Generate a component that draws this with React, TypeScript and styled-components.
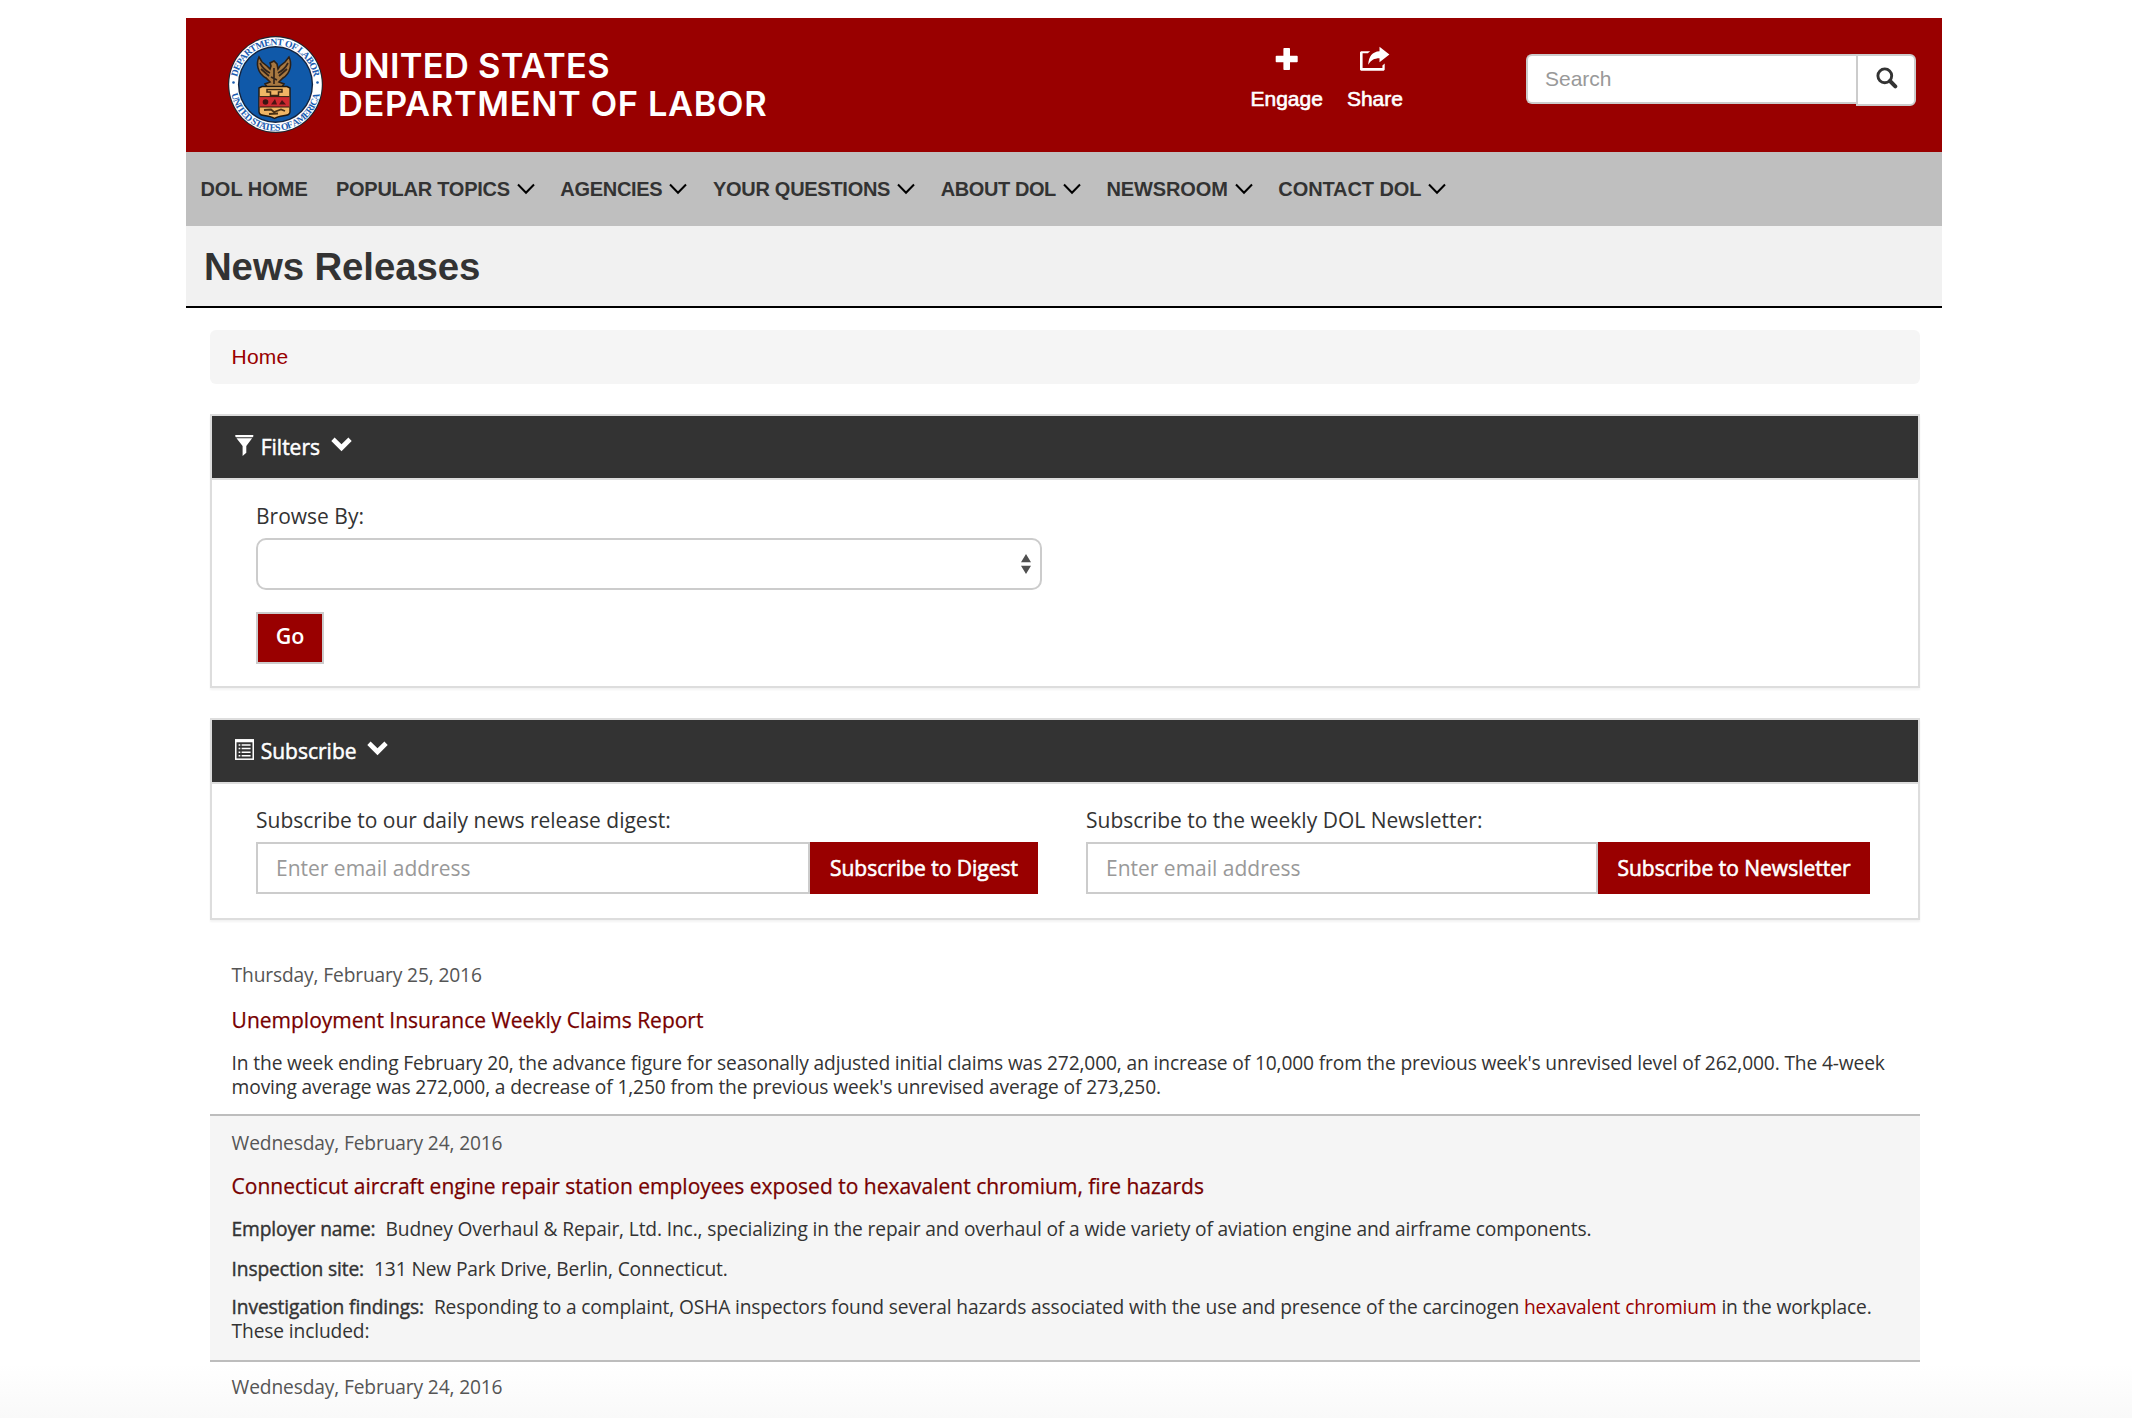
import React from "react";
import styled, { createGlobalStyle, css } from "styled-components";

const sans = `"Liberation Sans", Arial, sans-serif`;
const open = `"Open Sans", "Noto Sans", sans-serif`;

const Global = createGlobalStyle`
  * { box-sizing: border-box; }
  html, body { margin: 0; padding: 0; background: #fff; }
  body { font-family: ${open}; color: #333; }
  p, h1, h2, h3 { margin: 0; font-weight: 400; }
  a { color: inherit; text-decoration: none; }
`;

type Track = { $ls?: number };
const tracked = css<Track>`
  letter-spacing: ${(p) => p.$ls ?? 0}px;
  white-space: nowrap;
`;

const Screen = styled.div`
  height: 1418px;
  overflow: hidden;
  padding: 18px 0 0 186px;
  background: linear-gradient(#fff 1364px, #f9f9f9 1418px);
`;
const Page = styled.div`
  width: 1756px;
`;

const Banner = styled.header`
  height: 134px;
  background: #900;
  display: flex;
  align-items: flex-start;
  color: #fff;
`;
const Brand = styled.a`
  display: flex;
  padding: 17px 0 0 41px;
  width: 1053px;
`;
const BrandName = styled.div`
  font: 600 34.4px/37.5px Inter, sans-serif;
  padding: 12px 0 0 14px;
`;
const BrandLine = styled.div<Track>`
  ${tracked}
`;

const Actions = styled.div`
  display: flex;
  gap: 24px;
  padding: 27px 0 0 11.5px;
  width: 287px;
`;
const Action = styled.a`
  display: flex;
  flex-direction: column;
  align-items: center;
  font: 21px/24px ${sans};
  -webkit-text-stroke: 0.6px #fff;
  svg {
    height: 28px;
    margin-bottom: 14px;
  }
`;
const SearchBox = styled.form`
  display: flex;
  padding-top: 36px;
`;
const SearchInput = styled.input`
  width: 330px;
  height: 50px;
  border: 2px solid #ccc;
  border-right: 0;
  border-radius: 6px 0 0 6px;
  padding: 0 0 0 17px;
  font: 21px ${sans};
  &::placeholder {
    color: #999;
    opacity: 1;
  }
`;
const SearchButton = styled.button`
  width: 60px;
  height: 52px;
  border: 2px solid #ccc;
  border-radius: 0 6px 6px 0;
  background: #fff;
  padding: 11px 0 0 18px;
  display: flex;
  align-items: flex-start;
`;

const NavBar = styled.nav`
  height: 74px;
  background: #bfbfbf;
  display: flex;
  align-items: center;
  padding-left: 14.4px;
  gap: 25.5px;
`;
const NavItem = styled.a<Track & { $plain?: boolean }>`
  display: flex;
  align-items: center;
  gap: 7px;
  margin-right: ${(p) => (p.$plain ? 2.6 : 0)}px;
  font: 700 20px/24px ${sans};
  ${tracked}
`;

const TitleBar = styled.div`
  height: 82px;
  background: #f1f1f1;
  border-bottom: 2px solid #000;
  padding: 19px 0 0 18px;
`;
const Title = styled.h1<Track>`
  font: 700 38.4px/44px ${sans};
  ${tracked}
`;

const Content = styled.main`
  padding: 22px 22px 0 24px;
`;
const Crumbs = styled.div`
  height: 54px;
  border-radius: 6px;
  background: #f5f5f5;
  color: #900;
  font: 21px/53px ${sans};
  letter-spacing: 0.25px;
  padding-left: 21.5px;
`;

const Panel = styled.section`
  margin-top: 30px;
  border: 2px solid #ddd;
  box-shadow: 0 2px 2px rgba(0, 0, 0, 0.05);
  background: #fff;
`;
const PanelHead = styled.h2`
  height: 64px;
  display: flex;
  align-items: center;
  background: #333;
  border-bottom: 2px solid #ddd;
  padding-left: 23px;
  color: #fff;
  font: 21px/30px ${open};
  -webkit-text-stroke: 0.5px #fff;
  svg:first-child {
    margin-top: -4px;
  }
  svg:last-child {
    margin-top: -6px;
  }
`;
const HeadText = styled.span`
  margin: -1px 10.5px 0 6.7px;
`;
const FilterBody = styled.div`
  height: 206px;
  padding: 21px 0 0 44px;
`;
const Label = styled.label`
  display: block;
  font: 21px/30px ${open};
  height: 37px;
`;
const Select = styled.div`
  width: 786px;
  height: 52px;
  border: 2px solid #ccc;
  border-radius: 10px;
  background: #fff;
  display: flex;
  align-items: center;
  justify-content: flex-end;
  padding-right: 8px;
`;
const GoButton = styled.button`
  display: block;
  margin-top: 22px;
  width: 68px;
  height: 52px;
  border: 2px solid #ccc;
  background: #900;
  color: #fff;
  font: 600 21.5px/30px ${open};
  padding: 0 0 4px;
`;
const SubscribeBody = styled.div`
  height: 134px;
  padding: 21px 0 0 44px;
  display: flex;
`;
const Field = styled.div<{ $w: number }>`
  width: ${(p) => p.$w}px;
`;
const Row = styled.div`
  display: flex;
`;
const Email = styled.input<{ $w: number }>`
  width: ${(p) => p.$w}px;
  height: 52px;
  border: 2px solid #ccc;
  border-radius: 0;
  padding: 0 0 0 18px;
  font: 21px ${open};
  &::placeholder {
    color: #999;
    opacity: 1;
  }
`;
const Submit = styled.button<{ $w: number }>`
  width: ${(p) => p.$w}px;
  height: 52px;
  border: 0;
  background: #900;
  color: #fff;
  font: 21px ${open};
  -webkit-text-stroke: 0.6px #fff;
  padding: 0;
  white-space: nowrap;
`;

const List = styled.div`
  margin-top: 33px;
`;
const Release = styled.article<{ $alt?: boolean; $h: number; $top: number }>`
  height: ${(p) => p.$h}px;
  padding: ${(p) => p.$top}px 0 0 21.6px;
  background: ${(p) => (p.$alt ? "#f5f5f5" : "transparent")};
  border-bottom: 2px solid #bdbdbd;
`;
const DateLine = styled.p<{ $gap: number }>`
  font: 19.2px/24px ${open};
  letter-spacing: -0.14px;
  color: #555;
  margin-bottom: ${(p) => p.$gap}px;
`;
const Headline = styled.h3`
  font: 21px/28px ${open};
  color: #700;
  -webkit-text-stroke: 0.25px #700;
  margin-bottom: 17px;
  white-space: nowrap;
`;
const Para = styled.p<{ $gap?: number }>`
  font: 19.2px/24px ${open};
  letter-spacing: -0.135px;
  margin-bottom: ${(p) => p.$gap ?? 0}px;
  white-space: nowrap;
`;
const Term = styled.span`
  -webkit-text-stroke: 0.4px #333;
  margin-right: 10px;
`;
const Link = styled.a`
  color: #900;
`;

const Seal = () => (
  <svg width="97" height="99" viewBox="-48.5 -49.5 97 99">
    <ellipse rx="47.4" ry="48.4" fill="#1d2430" />
    <ellipse rx="46.3" ry="47.3" fill="#fff" />
    <ellipse rx="37.6" ry="38.4" fill="#14243f" />
    <ellipse rx="36.2" ry="37" fill="#1059a9" />
    <path id="sealTop" d="M-38.7 7 A39.2 40 0 1 1 38.7 7" fill="none" />
    <path id="sealBottom" d="M-44.6 7 A45.1 46 0 0 0 44.6 7" fill="none" />
    <g fill="#1b5cb0" fontFamily="Liberation Serif, serif" fontWeight="700" fontSize="9.6">
      <text textAnchor="middle"><textPath href="#sealTop" startOffset="50%" textLength="108">DEPARTMENT OF LABOR</textPath></text>
      <text textAnchor="middle"><textPath href="#sealBottom" startOffset="50%" textLength="124">UNITED STATES OF AMERICA</textPath></text>
    </g>
    <circle cx="-42" cy="-2" r="1.3" fill="#1b5cb0" />
    <circle cx="42" cy="-2" r="1.3" fill="#1b5cb0" />
    <g transform="translate(-1.500 -1.500)">
      <path d="M-15 -26 C-18 -20 -17 -10 -8 -5 L-4 -1 L-9 1 L-7 4 L8 4 L10 1 L5 -1 L9 -5 C17 -10 18 -20 15 -26 L11 -21 L6 -17 L4 -14 L3 -19 L0 -22 L-4 -20 L-3 -17 L-4 -14 L-7 -17 L-12 -21Z" fill="#a87840" stroke="#2b2018" strokeWidth="1.6" />
      <path d="M-14 -20 C-11 -14 -8 -12 -4 -10 M-13 -14 L-5 -7 M14 -20 C11 -14 8 -12 4 -10 M13 -14 L5 -7 M0 -15 V1 M-3 -6 L3 -3" stroke="#33241a" strokeWidth="1.7" fill="none" />
      <path d="M-15 5 L-12 3.500 H13 L16 5 V29 C16 34 7 31.500 .5 35.500 C-6 31.500 -15 34 -15 29Z" fill="#f0b565" stroke="#1f1812" strokeWidth="1.400" />
      <rect x="-14.300" y="14" width="29.600" height="10" fill="#cf2a30" />
      <path d="M-7 6.500 H8 V9 H4.500 V12.500 H-3.500 V9 H-7Z" fill="none" stroke="#3a2712" strokeWidth="1.500" />
      <circle cx="-8.500" cy="19" r="2.800" fill="#3a1512" />
      <path d="M-3 21.500 L1 16 L3 21.500Z M5 21.500 L8 17 L12 21.500Z" fill="#4c1414" />
      <path d="M-14.300 13.600 H15.300 M-14.300 24 H15.300" stroke="#2a1a12" strokeWidth="1" />
      <path d="M-10 27 L-3 26.500 L0 29 L7 26.500 L11 28 M-5 31 L4 30.500" fill="none" stroke="#4a3216" strokeWidth="1.800" />
    </g>
  </svg>
);
const Plus = () => (
  <svg width="24" height="28" viewBox="0 0 24 28">
    <path d="M9.200 3h5a.8.8 0 0 1 .8.800v6.900h6.900a.8.800 0 0 1 .8.800v5a.8.800 0 0 1-.8.800H15v6.900a.8.800 0 0 1-.8.800h-5a.8.800 0 0 1-.8-.8v-6.900H1.500a.8.800 0 0 1-.8-.8v-5a.8.800 0 0 1 .8-.8h6.900V3.800a.8.800 0 0 1 .8-.8z" fill="#fff" stroke="none" />
  </svg>
);
const ShareIcon = () => (
  <svg width="30" height="28" viewBox="0 0 30 28">
    <path d="M0 7.200 1 6.200h9.200L7.800 8.300H2.600v14.600h19.800v-2.500l2.300-2v6.300l-1 1H1l-1-1z" fill="#fff" stroke="none" />
    <path d="M19.500 1.800 29.400 9.600 19.500 17.300v-4.100c-5.300.1-8.600 1.700-11.300 6.600C8.600 11.600 12.300 6.600 19.500 6.200z" fill="#fff" stroke="none" />
  </svg>
);
const Magnifier = () => (
  <svg width="22" height="22" viewBox="0 0 22 22" fill="none" stroke="#333">
    <circle cx="8.800" cy="8.800" r="6.900" strokeWidth="2.900" />
    <path d="M14 14 19.300 19.300" strokeWidth="4" strokeLinecap="round" />
  </svg>
);
const NavChevron = () => (
  <svg width="18" height="12" viewBox="0 0 18 12">
    <path d="M1 1.500 9 9.800 17 1.500" fill="none" stroke="#000" strokeWidth="2" />
  </svg>
);
const BigChevron = () => (
  <svg width="21" height="15" viewBox="0 0 21 15">
    <path d="M3.600 0.500 10.500 7.200 17.400 0.500 20.700 3.900 10.500 14.200.3 3.900Z" fill="#fff" stroke="none" />
  </svg>
);
const Funnel = () => (
  <svg width="19" height="21" viewBox="0 0 19 21" fill="#fff" stroke="none">
    <path d="M.3 0h18v1.500l-.7.700H1L.3 1.500z" />
    <path d="M1.500 3.300h15.600L11.300 11v6.800L7.600 21V11z" />
  </svg>
);
const ListIcon = () => (
  <svg width="19" height="21" viewBox="0 0 20 22" stroke="none">
    <path d="M0 0h20v22H0z" fill="#fff" />
    <path d="M1.600 3.400h16.800v17H1.600z" fill="#333" />
    <path d="M3.800 5.400h1.800v1.600H3.800zm3.200 0h9.400v1.600H7zM3.800 9.200h1.800v1.600H3.800zm3.200 0h9.400v1.600H7zM3.800 13h1.800v1.600H3.800zm3.200 0h9.400v1.600H7zM3.800 16.800h1.800v1.600H3.800zm3.200 0h9.400v1.600H7z" fill="#fff" />
  </svg>
);
const SelectArrows = () => (
  <svg width="12" height="20" viewBox="0 0 12 20">
    <path d="M6 0 11 8.300H1zM6 20 1 11.800h10z" fill="#505050" />
  </svg>
);

const nav: { label: string; menu: boolean; ls: number }[] = [
  { label: "DOL HOME", menu: false, ls: 0 },
  { label: "POPULAR TOPICS", menu: true, ls: -0.25 },
  { label: "AGENCIES", menu: true, ls: -0.3 },
  { label: "YOUR QUESTIONS", menu: true, ls: -0.28 },
  { label: "ABOUT DOL", menu: true, ls: -0.4 },
  { label: "NEWSROOM", menu: true, ls: -0.1 },
  { label: "CONTACT DOL", menu: true, ls: -0.1 },
];

export default function App() {
  return (
    <>
      <Global />
      <Screen>
        <Page>
          <Banner>
            <Brand>
              <Seal />
              <BrandName>
                <BrandLine $ls={0.3}>UNITED STATES</BrandLine>
                <BrandLine $ls={0.67}>DEPARTMENT OF LABOR</BrandLine>
              </BrandName>
            </Brand>
            <Actions>
              <Action><Plus />Engage</Action>
              <Action><ShareIcon />Share</Action>
            </Actions>
            <SearchBox>
              <SearchInput placeholder="Search" />
              <SearchButton type="button" aria-label="Search"><Magnifier /></SearchButton>
            </SearchBox>
          </Banner>
          <NavBar>
            {nav.map((n) => (
              <NavItem key={n.label} $ls={n.ls} $plain={!n.menu}>
                {n.label}
                {n.menu && <NavChevron />}
              </NavItem>
            ))}
          </NavBar>
          <TitleBar>
            <Title $ls={-0.1}>News Releases</Title>
          </TitleBar>
          <Content>
            <Crumbs>Home</Crumbs>
            <Panel>
              <PanelHead><Funnel /><HeadText>Filters</HeadText><BigChevron /></PanelHead>
              <FilterBody>
                <Label>Browse By:</Label>
                <Select><SelectArrows /></Select>
                <GoButton>Go</GoButton>
              </FilterBody>
            </Panel>
            <Panel>
              <PanelHead><ListIcon /><HeadText>Subscribe</HeadText><BigChevron /></PanelHead>
              <SubscribeBody>
                <Field $w={830}>
                  <Label>Subscribe to our daily news release digest:</Label>
                  <Row>
                    <Email $w={554} placeholder="Enter email address" />
                    <Submit $w={228}>Subscribe to Digest</Submit>
                  </Row>
                </Field>
                <Field $w={784}>
                  <Label>Subscribe to the weekly DOL Newsletter:</Label>
                  <Row>
                    <Email $w={512} placeholder="Enter email address" />
                    <Submit $w={272}>Subscribe to Newsletter</Submit>
                  </Row>
                </Field>
              </SubscribeBody>
            </Panel>
            <List>
              <Release $h={163} $top={10}>
                <DateLine $gap={19}>Thursday, February 25, 2016</DateLine>
                <Headline>Unemployment Insurance Weekly Claims Report</Headline>
                <Para>
                  In the week ending February 20, the advance figure for seasonally adjusted initial claims was 272,000, an increase of 10,000 from the previous week's unrevised level of 262,000. The 4-week
                  <br />
                  moving average was 272,000, a decrease of 1,250 from the previous week's unrevised average of 273,250.
                </Para>
              </Release>
              <Release $alt $h={246} $top={15}>
                <DateLine $gap={17}>Wednesday, February 24, 2016</DateLine>
                <Headline>Connecticut aircraft engine repair station employees exposed to hexavalent chromium, fire hazards</Headline>
                <Para $gap={16}>
                  <Term>Employer name:</Term>Budney Overhaul &amp; Repair, Ltd. Inc., specializing in the repair and overhaul of a wide variety of aviation engine and airframe components.
                </Para>
                <Para $gap={14}>
                  <Term>Inspection site:</Term>131 New Park Drive, Berlin, Connecticut.
                </Para>
                <Para>
                  <Term>Investigation findings:</Term>Responding to a complaint, OSHA inspectors found several hazards associated with the use and presence of the carcinogen <Link>hexavalent chromium</Link> in the workplace.
                  <br />
                  These included:
                </Para>
              </Release>
              <Release $h={120} $top={13}>
                <DateLine $gap={20}>Wednesday, February 24, 2016</DateLine>
              </Release>
            </List>
          </Content>
        </Page>
      </Screen>
    </>
  );
}
